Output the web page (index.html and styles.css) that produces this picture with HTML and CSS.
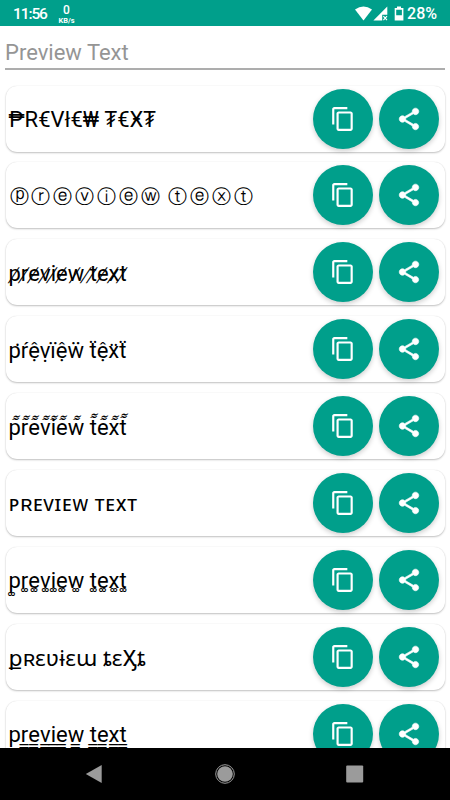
FILE: index.html
```html
<!DOCTYPE html>
<html lang="en">
<head>
    <meta charset="UTF-8">
    <meta name="viewport" content="width=device-width, initial-scale=1.0">
    <title>Preview Text</title>
    <link rel="stylesheet" href="styles.css">
</head>
<body>
    <svg class="sprite">
        <symbol id="copy" viewBox="0 0 24 24">
            <path d="M16 1H4c-1.1 0-2 .9-2 2v14h2V3h12V1zm3 4H8c-1.1 0-2 .9-2 2v14c0 1.1.9 2 2 2h11c1.1 0 2-.9 2-2V7c0-1.1-.9-2-2-2zm0 16H8V7h11v14z"/>
        </symbol>
        <symbol id="share" viewBox="0 0 24 24">
            <path d="M18 16.08c-.76 0-1.44.3-1.96.77L8.91 12.7c.05-.23.09-.46.09-.7s-.04-.47-.09-.7l7.05-4.11c.54.5 1.25.81 2.04.81 1.66 0 3-1.34 3-3s-1.34-3-3-3-3 1.34-3 3c0 .24.04.47.09.7L8.04 9.81C7.5 9.31 6.79 9 6 9c-1.66 0-3 1.34-3 3s1.34 3 3 3c.79 0 1.5-.31 2.04-.81l7.12 4.16c-.05.21-.08.43-.08.65 0 1.61 1.31 2.92 2.92 2.92s2.92-1.31 2.92-2.92-1.31-2.92-2.92-2.92z"/>
        </symbol>
    </svg>

    <div class="status">
        <span class="time">11:56</span>
        <div class="speed"><b>0</b><span>KB/s</span></div>
        <svg class="signals" width="50" height="16" viewBox="0 0 50 16">
            <path d="M0 3.4Q8.5-2.6 17 3.4L8.5 14.5z"/>
            <path d="M32.3 0.5V8.8H27.2V14.5H18.4z"/>
            <path class="cross" d="M28.4 10.2l3.6 3.9M32 10.2l-3.6 3.9"/>
            <path fill-rule="evenodd" d="M42 .5h4v1.6h2.4V14.6H39.7V2.1H42zM41.2 3.7V9.2h5.7V3.7z"/>
        </svg>
        <span class="percent">28%</span>
    </div>

    <input type="text" class="preview" placeholder="Preview Text">

    <div class="list">
        <div class="card">
            <div class="text money">₱R€Vł€₩ ₮€Ӿ₮</div>
            <button class="btn"><svg><use href="#copy"/></svg></button>
            <button class="btn"><svg class="share"><use href="#share"/></svg></button>
        </div>
        <div class="card">
            <div class="text circled">ⓟⓡⓔⓥⓘⓔⓦ ⓣⓔⓧⓣ</div>
            <button class="btn"><svg><use href="#copy"/></svg></button>
            <button class="btn"><svg class="share"><use href="#share"/></svg></button>
        </div>
        <div class="card">
            <div class="text marked slash">preview text</div>
            <button class="btn"><svg><use href="#copy"/></svg></button>
            <button class="btn"><svg class="share"><use href="#share"/></svg></button>
        </div>
        <div class="card">
            <div class="text marked dots">pŕệṿïệẅ tệxt</div>
            <button class="btn"><svg><use href="#copy"/></svg></button>
            <button class="btn"><svg class="share"><use href="#share"/></svg></button>
        </div>
        <div class="card">
            <div class="text marked waves">preview text</div>
            <button class="btn"><svg><use href="#copy"/></svg></button>
            <button class="btn"><svg class="share"><use href="#share"/></svg></button>
        </div>
        <div class="card">
            <div class="text caps">ᴘʀᴇᴠɪᴇᴡ ᴛᴇxᴛ</div>
            <button class="btn"><svg><use href="#copy"/></svg></button>
            <button class="btn"><svg class="share"><use href="#share"/></svg></button>
        </div>
        <div class="card">
            <div class="text marked rings">preview text</div>
            <button class="btn"><svg><use href="#copy"/></svg></button>
            <button class="btn"><svg class="share"><use href="#share"/></svg></button>
        </div>
        <div class="card">
            <div class="text curly">քʀɛʋɨɛա ȶɛӼȶ</div>
            <button class="btn"><svg><use href="#copy"/></svg></button>
            <button class="btn"><svg class="share"><use href="#share"/></svg></button>
        </div>
        <div class="card">
            <div class="text marked lines">preview text</div>
            <button class="btn"><svg><use href="#copy"/></svg></button>
            <button class="btn"><svg class="share"><use href="#share"/></svg></button>
        </div>
    </div>

    <div class="nav">
        <svg width="20" height="20" viewBox="0 0 20 20"><path d="M.8 10L16.7 1v18z"/></svg>
        <svg width="20" height="20" viewBox="0 0 20 20"><circle cx="10" cy="10" r="7.8"/><circle class="ring" cx="10" cy="10" r="9.3"/></svg>
        <svg width="20" height="20" viewBox="0 0 20 20"><rect x="1.2" y="1.5" width="17" height="17" rx="1"/></svg>
    </div>

    <script>
        // one span per letter, the stylesheet puts the mark on it
        document.querySelectorAll(".marked").forEach(text => {
            const letters = [...text.textContent];
            text.textContent = "";
            letters.forEach(char => {
                const letter = document.createElement("span");
                letter.textContent = char;
                letter.className = char === " " ? "space" : "letter " + char;
                text.appendChild(letter);
            });
        });
    </script>
</body>
</html>
```
FILE: styles.css
```css
* {
    box-sizing: border-box;
}

body {
    margin: 0;
    height: 800px;
    display: flex;
    flex-direction: column;
    overflow: hidden;
    background-color: #fff;
    font-family: Roboto, "Noto Sans", "DejaVu Sans", sans-serif;
}

.sprite {
    display: none;
}

.status {
    flex: none;
    display: flex;
    align-items: center;
    height: 26px;
    padding: 1px 13px 0;
    background-color: #009f8b;
    color: #fff;
    fill: #fff;
}

.time {
    width: 45px;
    font-size: 15.5px;
    font-weight: 500;
    letter-spacing: -1.1px;
}

.speed {
    width: 17px;
    text-align: center;
}

.speed b {
    display: block;
    font-size: 12px;
    font-weight: 500;
    line-height: 14px;
}

.speed span {
    display: block;
    font-size: 7.4px;
    font-weight: bold;
    line-height: 8px;
}

.signals {
    margin-left: auto;
}

.cross {
    stroke: #fff;
    stroke-width: 1.2;
}

.percent {
    margin-left: 2px;
    font-size: 16px;
    font-weight: 500;
}

.preview {
    flex: none;
    height: 44px;
    margin: 0 5px;
    padding: 11px 0 0;
    border: none;
    border-bottom: 2px solid #adadad;
    outline: none;
    font-family: Roboto, sans-serif;
    font-size: 22px;
}

.preview::placeholder {
    color: #959595;
}

.list {
    flex: 1;
    min-height: 0;
    overflow: hidden;
    padding: 15.5px 5.5px 0;
}

.card {
    display: flex;
    align-items: center;
    height: 66px;
    margin-bottom: 10.9px;
    padding: 0 6px 0 3px;
    border-radius: 11px;
    background-color: #fff;
    box-shadow: 0 1px 2px rgba(0, 0, 0, .24), 0 0 1px rgba(0, 0, 0, .12);
}

.text {
    flex: 1;
    padding-top: 2px;
    font-size: 22px;
    line-height: 30px;
    white-space: pre;
    color: #000;
}

.circled {
    padding: 4px 0 0 1px;
    font-size: 19px;
    letter-spacing: 2.85px;
    word-spacing: -2px;
}

.marked {
    padding-top: 3px;
}

.caps {
    letter-spacing: .43px;
}

.curly {
    padding-top: 4px;
    letter-spacing: .15px;
}

.marked span {
    position: relative;
}

/* marks lie over the letters */
.marked span::after {
    position: absolute;
    left: 50%;
    top: 0;
    margin-left: -3.5px;
    line-height: 26px;
    transform: translateX(-50%);
    font-family: "Noto Sans", sans-serif;
}

.slash span::after {
    content: "\a0\338";
    margin-left: -4px;
    transform: translateX(-50%) skewX(-14deg) scaleY(.88);
    font-weight: 300;
}

.dots .p::after {
    content: "\a0\307";
    margin-left: 0;
}

.dots .x::after,
.dots .t::after {
    content: "\a0\308";
    margin-left: -3px;
}

.dots .t::after {
    top: -3px;
}

.waves .letter::after {
    content: "\a0\34c";
    top: -4px;
    margin-left: -4px;
    transform: translateX(-50%) skewX(-25deg);
    font-size: 18px;
    font-weight: 600;
}

.waves .t::after {
    top: -6px;
}

.rings .letter::after {
    content: "\a0\35a";
    top: 0;
    margin-left: -2.5px;
    font-size: 18px;
}

.rings .p::after {
    top: 4px;
    left: 25%;
}

.lines .letter::after {
    content: "\a0\333";
    top: -1.5px;
}

.lines .p::after {
    top: 5px;
}

.btn {
    display: flex;
    align-items: center;
    justify-content: center;
    width: 60px;
    height: 60px;
    margin-left: 6px;
    padding: 0;
    border: none;
    border-radius: 50%;
    background-color: #009f8b;
    box-shadow: 0 2px 5px rgba(0, 0, 0, .2);
}

.btn svg {
    width: 26px;
    height: 26px;
    fill: #fff;
}

.btn .share {
    stroke: #fff;
    stroke-width: .6;
}

.nav {
    flex: none;
    display: flex;
    align-items: center;
    justify-content: space-between;
    height: 52px;
    padding: 0 85px;
    background-color: #000;
    fill: #9b9b9b;
}

.ring {
    fill: none;
    stroke: #9b9b9b;
    stroke-width: 1;
}
```
